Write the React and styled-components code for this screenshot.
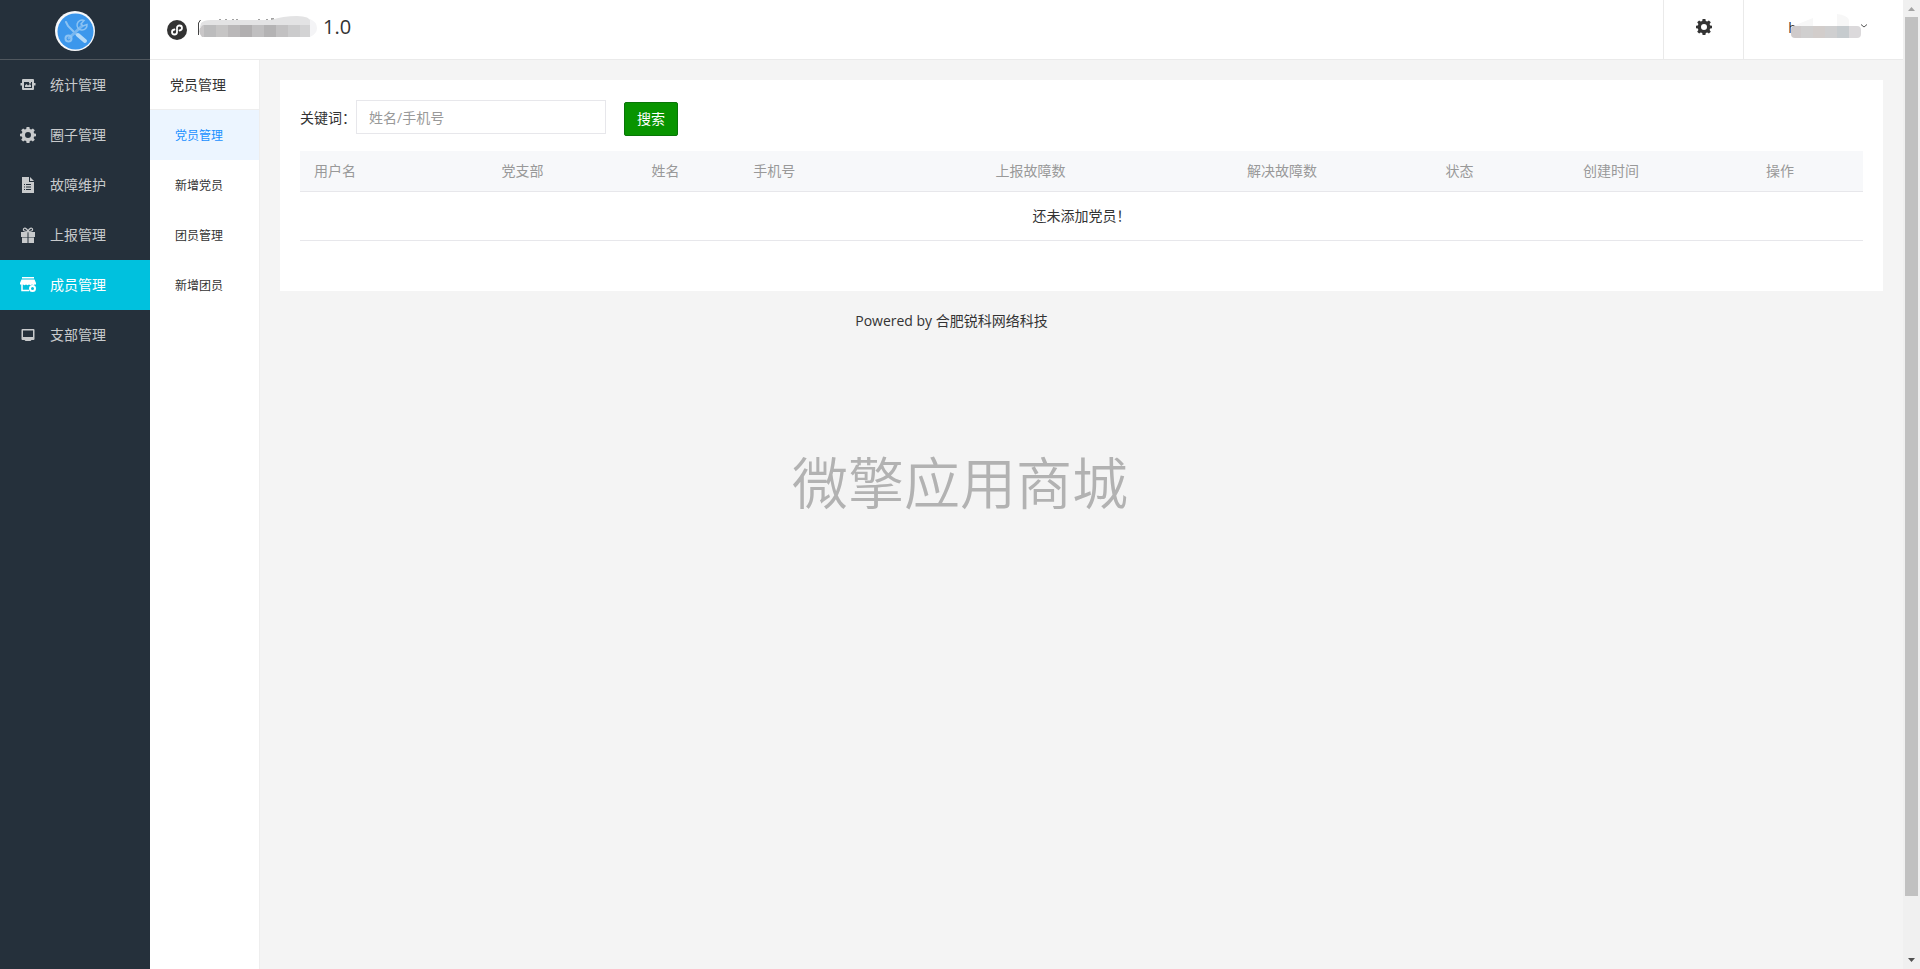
import React, { useState } from 'react'
import styled, { createGlobalStyle } from 'styled-components'

const GlobalStyle = createGlobalStyle`
    * {
        box-sizing: border-box;
    }
    body {
        margin: 0;
        background: #f4f4f4;
        color: #333;
        font-family: "Open Sans", "Noto Sans CJK SC", sans-serif;
        font-size: 14px;
        line-height: 20px;
        overflow: hidden;
    }
`

const GEAR = 'M6.6 0h2.8l.4 2 1.4.6L12.9 1.400l1.900 1.900-1.200 1.700.6 1.400 2 .4v2.400l-2 .4-.6 1.400 1.200 1.700-1.900 1.900-1.700-1.200-1.400.6-.4 2H6.600l-.4-2-1.400-.6-1.700 1.200-1.900-1.900 1.200-1.700-.6-1.400-2-.4V6.800l2-.4.6-1.400-1.200-1.700 1.900-1.900 1.700 1.200 1.400-.6zM8 5a3 3 0 1 0 0 6 3 3 0 0 0 0-6z'

const icons = {
    stats: (
        <path
            fillRule="evenodd"
            d="M3 2h10a1 1 0 0 1 1 1v3h1.500v2.500H14V12a1 1 0 0 1-1 1H3a1 1 0 0 1-1-1V8.500H.5V6H2V3a1 1 0 0 1 1-1zM4 5v6h8V5h-1v1.500H9V5zM5 10V8.500L6.500 7 8 8.500 10 7l1 1.500V10z"
        />
    ),
    gear: <path fillRule="evenodd" d={GEAR} />,
    file: (
        <path
            fillRule="evenodd"
            d="M2 0h7v5h5v11H2zM10 0l4 4h-4zM4 7v1h1V7zm2 0v1h5V7zM4 9.500v1h1v-1zm2 0v1h5v-1zM4 12v1h1v-1zm2 0v1h5v-1z"
        />
    ),
    gift: (
        <>
            <path d="M1 5h6.500v5H1zM8.500 5H15v5H8.500zM2 10.500h5.500V16H2zM8.500 10.500H14V16H8.500z" />
            <path d="M7.500 4.500C4 4.500 3 3.500 3.500 2S7 1 8 4.500C9 1 12 .5 12.500 2S12 4.500 8.500 4.500" fill="none" stroke="currentColor" strokeWidth="1.200" />
        </>
    ),
    shop: (
        <>
            <path d="M2 0h12v1.500H2zM1.500 2.500h13L16 6v1.500h-1.500l-1 .8-1.500-.8-1.500.8-1.500-.8-1.500.8L6 7.500l-1.500.8L3 7.500H0V6z" />
            <path d="M2 7v6.500h7" fill="none" stroke="currentColor" strokeWidth="1.500" />
            <circle cx="12.500" cy="11.500" r="2.500" fill="none" stroke="currentColor" strokeWidth="2" />
        </>
    ),
    screen: (
        <path fillRule="evenodd" d="M2.500 2h11a1 1 0 0 1 1 1v9a1 1 0 0 1-1 1h-2l-1 1h-5l-1-1h-2a1 1 0 0 1-1-1V3a1 1 0 0 1 1-1zM3 3.500V10h10V3.500z" />
    )
}

const menu = [
    { icon: 'stats', text: '统计管理' },
    { icon: 'gear', text: '圈子管理' },
    { icon: 'file', text: '故障维护' },
    { icon: 'gift', text: '上报管理' },
    { icon: 'shop', text: '成员管理' },
    { icon: 'screen', text: '支部管理' }
]

const subMenu = ['党员管理', '新增党员', '团员管理', '新增团员']

const columns = [
    { title: '用户名', width: '12%' },
    { title: '党支部', width: '9.6%' },
    { title: '姓名', width: '6.5%' },
    { title: '手机号', width: '15.5%' },
    { title: '上报故障数', width: '16.1%' },
    { title: '解决故障数', width: '12.7%' },
    { title: '状态', width: '8.8%' },
    { title: '创建时间', width: '11.7%' },
    { title: '操作', width: '7.1%' }
]

const Logo = () => (
    <svg width="40" height="40" viewBox="0 0 40 40" aria-hidden="true">
        <circle cx="20" cy="20" r="20" fill="#f7f8fa" />
        <circle cx="20.500" cy="20.500" r="18" fill="#3c97ec" />
        <g stroke="#8cc3f3" fill="none" strokeLinecap="round">
            <path d="M11 11l2 4 9 9" strokeWidth="2" />
            <path d="M23 24l7 6" strokeWidth="4" stroke="#b5daf8" />
            <path d="M14 27L27 15" strokeWidth="3" stroke="#78b7f0" />
            <circle cx="13.500" cy="27.500" r="3" strokeWidth="2" />
            <path d="M29 9.500a5 5 0 1 0 3 4l-4 1.500-2-2z" strokeWidth="1.500" />
        </g>
    </svg>
)

const MiniProgram = () => (
    <svg width="20" height="20" viewBox="0 0 20 20" aria-hidden="true">
        <circle cx="10" cy="10" r="10" fill="#333" />
        <path
            d="M12.500 10.500c1.500-.2 2.500-1.200 2.500-2.500A2.500 2.500 0 0 0 12.500 5.500 2.500 2.500 0 0 0 10 8v4a2.500 2.500 0 0 1-2.500 2.500A2.500 2.500 0 0 1 5 12c0-1.300 1-2.300 2.500-2.500"
            fill="none"
            stroke="#fff"
            strokeWidth="1.800"
            strokeLinecap="round"
        />
    </svg>
)

const nameTiles = ['#c9c7c8', '#bcbcbd', '#c6c5c5', '#bab8b9', '#b1afb0', '#c0bfc0', '#b4b3b4', '#c2c1c2', '#cbcbcc', '#d3d3d4']

const MaskedName = () => (
    <svg width="121" height="24" viewBox="0 0 121 24" aria-hidden="true">
        <path d="M1.500 20V8l2-3M23 4v2M29 4v2M36 4v2M40 4v2M62 4v2M70 4v2M74 4h3" stroke="#444" fill="none" />
        <path d="M4 8q3-3 10-3h60q12-4 26-4 13 0 14 6v5H3z" fill="#e3e3e4" />
        <path d="M113 4q7 3 7 9t-7 9z" fill="#f4f4f6" />
        <clipPath id="nameClip">
            <path d="M6 10h107v12H5q-4-4-2-9z" />
        </clipPath>
        <g clipPath="url(#nameClip)">
            {nameTiles.map((color, i) => (
                <rect key={i} x={i === 0 ? 0 : i * 12 - 5} y="10" width={i === 9 ? 18 : 12} height="12" fill={color} />
            ))}
        </g>
    </svg>
)

const userTiles = ['#cfcaca', '#d0cfcf', '#d2cdcb', '#cfcfd0', '#c6cbce', '#dbd9db']

const MaskedUser = () => (
    <svg width="70" height="24" viewBox="0 0 70 24" aria-hidden="true">
        <path d="M2 12L22 4v8zM46 0q10 1 12 6v6H46z" fill="#f7f7f7" />
        <clipPath id="userClip">
            <rect y="12" width="70" height="12" rx="4" />
        </clipPath>
        <g clipPath="url(#userClip)">
            {userTiles.map((color, i) => (
                <rect key={i} x={i * 12 - 2} y="12" width="12" height="12" fill={color} />
            ))}
        </g>
    </svg>
)

const App = () => {
    const [active, setActive] = useState(4)
    const [activeSub, setActiveSub] = useState(0)
    const [keyword, setKeyword] = useState('')

    return (
        <Page>
            <GlobalStyle />
            <SideBar>
                <LogoBox><Logo /></LogoBox>
                {menu.map((item, i) => (
                    <MenuItem key={item.text} href="#" $active={i === active} onClick={() => setActive(i)}>
                        <Icon viewBox="0 0 16 16" aria-hidden="true">{icons[item.icon]}</Icon>
                        {item.text}
                    </MenuItem>
                ))}
            </SideBar>
            <Body>
                <TopBar>
                    <AppTitle>
                        <MiniProgram />
                        <AppName>
                            <MaskedName />
                            <span>1.0</span>
                        </AppName>
                    </AppTitle>
                    <SettingButton type="button" aria-label="设置">
                        <Icon viewBox="0 0 16 16" aria-hidden="true">{icons.gear}</Icon>
                    </SettingButton>
                    <UserButton type="button">
                        <UserName>h</UserName>
                        <MaskedUser />
                        <svg width="6" height="4" viewBox="0 0 6 4" aria-hidden="true">
                            <path d="M0 .5l3 2.500 3-2.500" fill="none" stroke="#555" />
                        </svg>
                    </UserButton>
                </TopBar>
                <Content>
                    <SubMenu>
                        <SubTitle>党员管理</SubTitle>
                        {subMenu.map((text, i) => (
                            <SubItem key={text} href="#" $active={i === activeSub} onClick={() => setActiveSub(i)}>
                                {text}
                            </SubItem>
                        ))}
                    </SubMenu>
                    <Main>
                        <Card>
                            <SearchForm onSubmit={(e) => e.preventDefault()}>
                                <Label htmlFor="keyword">关键词：</Label>
                                <SearchInput
                                    id="keyword"
                                    placeholder="姓名/手机号"
                                    value={keyword}
                                    onChange={(e) => setKeyword(e.target.value)}
                                />
                                <SearchButton type="submit">搜索</SearchButton>
                            </SearchForm>
                            <Table>
                                <thead>
                                    <tr>
                                        {columns.map((col) => (
                                            <Th key={col.title} $width={col.width}>{col.title}</Th>
                                        ))}
                                    </tr>
                                </thead>
                                <tbody>
                                    <tr>
                                        <EmptyCell colSpan={columns.length}>还未添加党员！</EmptyCell>
                                    </tr>
                                </tbody>
                            </Table>
                        </Card>
                        <Footer>Powered by 合肥锐科网络科技</Footer>
                    </Main>
                </Content>
            </Body>
            <ScrollTrack>
                <Arrow viewBox="0 0 17 17" $color="#a3a3a3"><path d="M5 11l3.500-4 3.500 4z" /></Arrow>
                <ScrollThumb />
                <Arrow viewBox="0 0 17 17" $color="#505050"><path d="M5 6l3.500 4L12 6z" /></Arrow>
            </ScrollTrack>
            <Watermark>微擎应用商城</Watermark>
        </Page>
    )
}

export default App

const Page = styled.div`
    display: flex;
    height: 100vh;
`

const SideBar = styled.nav`
    flex: 0 0 150px;
    background: #25303b;
`

const LogoBox = styled.div`
    display: flex;
    justify-content: center;
    height: 60px;
    padding-top: 11px;
    border-bottom: 1px solid #50575e;
`

const MenuItem = styled.a`
    display: flex;
    align-items: center;
    gap: 14px;
    height: 50px;
    padding-left: 20px;
    text-decoration: none;
    color: ${(props) => (props.$active ? '#fff' : '#c8cacc')};
    background: ${(props) => (props.$active ? '#00c1de' : 'transparent')};
`

const Icon = styled.svg`
    width: 16px;
    height: 16px;
    fill: currentColor;
`

const Body = styled.div`
    flex: 1;
    min-width: 0;
    display: flex;
    flex-direction: column;
`

const TopBar = styled.header`
    display: flex;
    height: 60px;
    background: #fff;
    border-bottom: 1px solid #eaeaea;
`

const AppTitle = styled.div`
    flex: 1;
    display: flex;
    align-items: center;
    gap: 10px;
    padding-left: 17px;
    font-size: 20px;
`

const AppName = styled.div`
    display: flex;
    align-items: center;
    gap: 5px;
    padding-bottom: 6px;
`

const BarButton = styled.button`
    display: flex;
    align-items: center;
    justify-content: center;
    padding: 0 0 6px;
    border: 0;
    border-left: 1px solid #eaeaea;
    background: none;
    color: #333;
    font: inherit;
    cursor: pointer;
`

const SettingButton = styled(BarButton)`
    width: 80px;
`

const UserButton = styled(BarButton)`
    width: 160px;
    padding: 0 0 8px 8px;
`

const UserName = styled.span`
    margin-right: -6px;
    padding-top: 4px;
`

const Content = styled.div`
    flex: 1;
    display: flex;
`

const SubMenu = styled.nav`
    flex: 0 0 110px;
    background: #fff;
    border-right: 1px solid #eee;
`

const SubTitle = styled.div`
    height: 50px;
    padding-left: 20px;
    line-height: 50px;
    border-bottom: 1px solid #eee;
`

const SubItem = styled.a`
    display: block;
    height: 50px;
    padding: 1px 0 0 25px;
    line-height: 50px;
    font-size: 12px;
    text-decoration: none;
    color: ${(props) => (props.$active ? '#1890ff' : '#333')};
    background: ${(props) => (props.$active ? '#ecf5ff' : '#fff')};
`

const Main = styled.main`
    flex: 1;
    min-width: 0;
    padding: 20px;
`

const Card = styled.section`
    padding: 20px 20px 50px;
    background: #fff;
`

const SearchForm = styled.form`
    display: flex;
    align-items: flex-start;
    margin-bottom: 15px;
`

const Label = styled.label`
    line-height: 36px;
`

const SearchInput = styled.input`
    width: 250px;
    height: 34px;
    padding: 0 12px;
    border: 1px solid #e7e7eb;
    font: inherit;
    &::placeholder {
        color: #999;
    }
`

const SearchButton = styled.button`
    width: 54px;
    height: 34px;
    margin: 2px 0 0 18px;
    padding: 0;
    border: 1px solid #087508;
    border-radius: 2px;
    background: #089400;
    color: #fff;
    font: inherit;
    cursor: pointer;
`

const Table = styled.table`
    width: 100%;
    table-layout: fixed;
    border-collapse: collapse;
`

const Th = styled.th`
    width: ${(props) => props.$width};
    padding: 10px 14px;
    text-align: left;
    font-weight: normal;
    color: #999;
    background: #f7f8fa;
    border-bottom: 1px solid #e7e7eb;
`

const EmptyCell = styled.td`
    padding: 14px;
    text-align: center;
    border-bottom: 1px solid #e7e7eb;
`

const Footer = styled.footer`
    padding: 20px 260px 0 0;
    text-align: center;
`

const ScrollTrack = styled.div`
    flex: 0 0 17px;
    display: flex;
    flex-direction: column;
    background: #f0f0f0;
`

const Arrow = styled.svg`
    flex: none;
    width: 17px;
    height: 17px;
    fill: ${(props) => props.$color};
`

const ScrollThumb = styled.div`
    flex: 1;
    margin: 0 2px 56px;
    background: #c1c1c1;
`

const Watermark = styled.div`
    position: fixed;
    top: 50%;
    left: 50%;
    transform: translate(-50%, -50%);
    padding-bottom: 6px;
    font-size: 56px;
    font-weight: 350;
    line-height: 1;
    white-space: nowrap;
    color: #b2b2b2;
    pointer-events: none;
`
